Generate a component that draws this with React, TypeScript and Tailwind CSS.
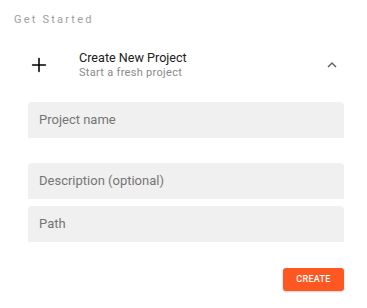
import { Plus } from "lucide-react";

function Field({ label, className = "" }: { label: string; className?: string }) {
  return (
    <div className={`flex h-9 items-center rounded-t bg-[#f0f0f0] px-[11px] text-[13px] text-[#757575] ${className}`}>
      {label}
    </div>
  );
}

export default function App() {
  return (
    <div className="h-[308px] w-[367px] bg-white font-['Roboto',sans-serif]">
      <div className="px-[14px] pt-[13px] text-[11px] leading-[14px] tracking-[2.2px] text-[#9e9e9e]">Get Started</div>
      <div className="mt-[23px] flex items-center pl-[28px] pr-[26px]">
        <Plus className="h-[22px] w-[22px] text-black" strokeWidth={1.7} />
        <div className="ml-[29px] flex-1">
          <div className="text-[12.6px] leading-[16px] text-[#212121]">Create New Project</div>
          <div className="text-[11px] leading-[14px] tracking-[0.3px] text-[#8a8a8a]">Start a fresh project</div>
        </div>
        <svg viewBox="0 0 24 24" className="h-[18px] w-[18px] fill-[#616161]">
          <path d="M12 8l-6 6 1.41 1.41L12 10.83l4.59 4.58L18 14z" />
        </svg>
      </div>
      <div className="mt-[22px] px-[28px] pr-[23px]">
        <Field label="Project name" />
        <Field label="Description (optional)" className="mt-[25px]" />
        <Field label="Path" className="mt-[7px]" />
        <div className="mt-[26px] flex justify-end">
          <button className="h-[23px] w-[61px] rounded-[3px] bg-[#ff5722] text-[9px] font-medium tracking-[0.3px] text-white shadow-[0_1px_2px_rgba(0,0,0,0.2)]">
            CREATE
          </button>
        </div>
      </div>
    </div>
  );
}
